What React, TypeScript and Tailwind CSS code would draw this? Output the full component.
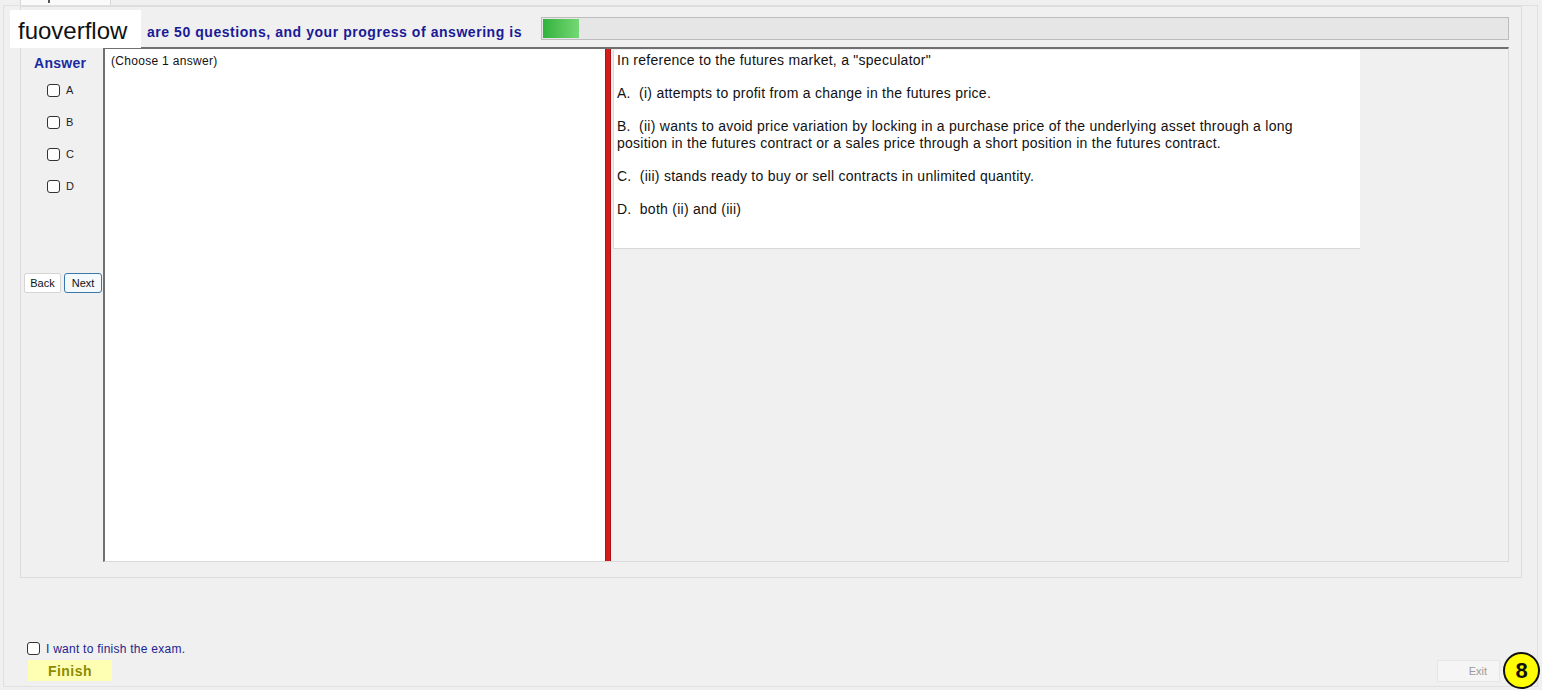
import React from "react";

function Box() {
  return <span className="inline-block w-[13px] h-[13px] border border-[#333333] rounded-[3px] bg-white" />;
}

export default function App() {
  const answers = ["A", "B", "C", "D"];
  return (
    <div
      className="relative w-[1542px] h-[690px] bg-[#f0f0f0] overflow-hidden flex flex-col"
      style={{ fontFamily: '"Liberation Sans", Arial, sans-serif' }}
    >
      {/* tab strip */}
      <div className="h-[5px] flex">
        <div className="ml-[20px] w-[91px] h-[5px] bg-[#fafafa] border-x border-[#d9d9d9] relative">
          <span className="absolute left-[27px] top-0 w-[2px] h-[3px] bg-[#555]" />
        </div>
      </div>

      {/* outer frame */}
      <div className="ml-[3px] w-[1535px] h-[682px] border border-[#e0e0e0] flex flex-col px-[16px]">
        {/* group box */}
        <div className="w-[1502px] h-[572px] border border-[#dcdcdc] flex flex-col">
          {/* header */}
          <div className="mt-[10px] h-[23px] flex items-center">
            <div className="ml-[126px] w-[394px] text-[14px] font-bold text-[#1a1a96] leading-[23px] pt-[8px] tracking-[0.55px] whitespace-nowrap">
              are 50 questions, and your progress of answering is
            </div>
            <div className="w-[968px] h-[23px] bg-[#e6e6e6] border border-[#bcbcbc] flex items-center">
              <div className="ml-[1px] w-[36px] h-[19px] bg-gradient-to-r from-[#2fb23c] to-[#74d874]" />
            </div>
          </div>

          {/* content row */}
          <div className="mt-[7px] flex h-[515px]">
            {/* left column */}
            <div className="w-[82px] flex flex-col">
              <div className="mt-[8px] pl-[13px] h-[16px] text-[14px] font-bold text-[#1a2aa0] leading-[16px] tracking-[0.3px]">Answer</div>
              <div className="mt-[3px] flex flex-col">
                {answers.map((a) => (
                  <div key={a} className="h-[32px] flex items-center pl-[26px] gap-[6px]">
                    <Box />
                    <span className="text-[11px] text-[#222] leading-[13px]">{a}</span>
                  </div>
                ))}
              </div>
              <div className="mt-[71px] pl-[3px] flex gap-[3px]">
                <button className="w-[37px] h-[20px] bg-white border border-[#d4d4d4] rounded-[2px] text-[11px] text-[#111] leading-[18px]">
                  Back
                </button>
                <button className="w-[38px] h-[20px] bg-[#f3f9fd] border border-[#3a78ac] rounded-[3px] text-[11px] text-[#111] leading-[18px]">
                  Next
                </button>
              </div>
            </div>

            {/* panels */}
            <div className="w-[1406px] h-[515px] border-t-2 border-l-2 border-t-[#707070] border-l-[#707070] border-r border-b border-r-[#dadada] border-b-[#dadada] flex">
              <div className="w-[500px] h-full bg-white pl-[6px] pt-[5px]">
                <div className="text-[12px] text-[#111] leading-[14px] tracking-[0.3px]">(Choose 1 answer)</div>
              </div>
              <div className="w-[6px] h-full bg-[#d41c1c] border-x border-[#b01010]" />
              <div className="flex-1 h-full bg-[#f0f0f0] pl-[2px] pt-[1px]">
                <div className="w-[747px] h-[199px] bg-white border-l border-b border-[#d8d8d8] pl-[3px] pt-[2px] text-[14px] text-[#111] leading-[17px] tracking-[0.26px]">
                  <p className="mb-[16px]">In reference to the futures market, a "speculator"</p>
                  <p className="mb-[16px]">A.&nbsp; (i) attempts to profit from a change in the futures price.</p>
                  <p className="mb-[16px] w-[700px]">
                    B.&nbsp; (ii) wants to avoid price variation by locking in a purchase price of the underlying asset through a long position in the futures contract or a sales price through a short position in the futures contract.
                  </p>
                  <p className="mb-[16px]">C.&nbsp; (iii) stands ready to buy or sell contracts in unlimited quantity.</p>
                  <p>D.&nbsp; both (ii) and (iii)</p>
                </div>
              </div>
            </div>
          </div>
        </div>

        {/* bottom */}
        <div className="mt-[63px] ml-[7px] h-[15px] flex items-center gap-[6px]">
          <Box />
          <span className="text-[12px] text-[#23238f] leading-[15px] tracking-[0.25px] pt-[2px]">I want to finish the exam.</span>
        </div>
        <div className="mt-[4px] flex justify-between items-start">
          <button className="ml-[8px] w-[84px] h-[21px] bg-[#ffffb4] text-[14px] font-bold text-[#8c8c00] leading-[21px] tracking-[0.5px] pt-[1px]">
            Finish
          </button>
          <button className="mr-[21px] w-[63px] h-[22px] bg-[#f5f5f5] border border-[#e6e6e6] text-[11px] text-[#9a9a9a] leading-[20px] text-right pr-[12px]">
            Exit
          </button>
        </div>
      </div>

      {/* watermark */}
      <div className="absolute left-[10px] top-[10px] w-[131px] h-[38px] bg-white flex items-center pl-[8px] pt-[4px] text-[24px] text-[#111] leading-[28px]">
        fuoverflow
      </div>

      {/* badge */}
      <div className="absolute left-[1503px] top-[652px] w-[37px] h-[37px] rounded-full bg-[#ffff00] border-2 border-[#111] flex items-center justify-center text-[22px] font-bold text-[#111] leading-none">
        8
      </div>
    </div>
  );
}
